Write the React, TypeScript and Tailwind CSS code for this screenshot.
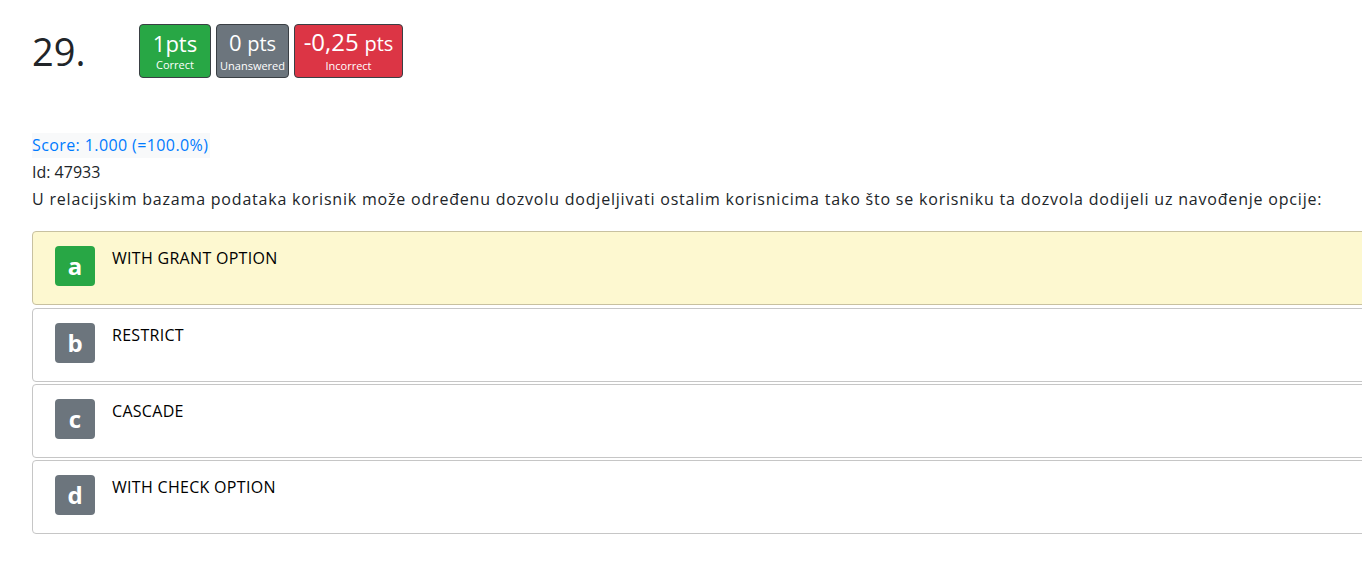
import React from 'react';

const options = [
  { letter: 'a', text: 'WITH GRANT OPTION', correct: true },
  { letter: 'b', text: 'RESTRICT', correct: false },
  { letter: 'c', text: 'CASCADE', correct: false },
  { letter: 'd', text: 'WITH CHECK OPTION', correct: false },
];

function Badge({ top, label, color }: { top: React.ReactNode; label: string; color: string }) {
  return (
    <div className={`${color} flex flex-col items-center justify-center h-[54px] px-[4px] rounded-[4px] border border-[#3a3f44] text-white leading-none whitespace-nowrap`}>
      <span className="text-[22px] leading-[26px] -mt-[1px]">{top}</span>
      <span className="text-[11px] leading-[13px] mt-[2px]">{label}</span>
    </div>
  );
}

export default function App() {
  return (
    <div className="w-[1362px] h-[578px] overflow-hidden bg-white text-[#212529] font-['Open_Sans',sans-serif]">
      <div className="pl-[32px] pt-[24px]">
        <div className="flex items-start">
          <div className="w-[107px] text-[38px] leading-none pt-[8px]">29.</div>
          <div className="flex gap-[5px]">
            <div className="w-[72px]"><Badge color="bg-[#28a745]" top="1pts" label="Correct" /></div>
            <div className="w-[73px]"><Badge color="bg-[#6c757d]" top={<>0 <span className="text-[20px]">pts</span></>} label="Unanswered" /></div>
            <div className="w-[109px]"><Badge color="bg-[#dc3545]" top={<><span className="text-[24px]">-0,25</span> <span className="text-[20px]">pts</span></>} label="Incorrect" /></div>
          </div>
        </div>

        <div className="mt-[54px] text-[16px] leading-[27px]">
          <span className="inline-block bg-[#f8f9fa] text-[#007bff] tracking-[0.4px] leading-[25px] pr-[2px]">Score: 1.000 (=100.0%)</span>
          <div className="leading-[27px]">Id: 47933</div>
          <div className="leading-[27px] tracking-[0.8px]">U relacijskim bazama podataka korisnik može određenu dozvolu dodjeljivati ostalim korisnicima tako što se korisniku ta dozvola dodijeli uz navođenje opcije:</div>
        </div>

        <div className="mt-[18px] flex flex-col gap-[2px] w-[1360px]">
          {options.map((o) => (
            <div
              key={o.letter}
              className={`h-[74px] rounded-[4px] border flex items-start pl-[22px] pt-[14px] ${
                o.correct ? 'bg-[#fdf8d0] border-[#c8c1a0] mb-[1px]' : 'bg-white border-[#c6c6c6]'
              }`}
            >
              <div
                className={`w-[40px] h-[40px] rounded-[4px] flex items-center justify-center text-white font-bold text-[24px] leading-none ${
                  o.correct ? 'bg-[#28a745]' : 'bg-[#6c757d]'
                }`}
              >
                {o.letter}
              </div>
              <div className="ml-[17px] text-[16px] leading-[24px] text-black tracking-[0.3px]">{o.text}</div>
            </div>
          ))}
        </div>
      </div>
    </div>
  );
}
